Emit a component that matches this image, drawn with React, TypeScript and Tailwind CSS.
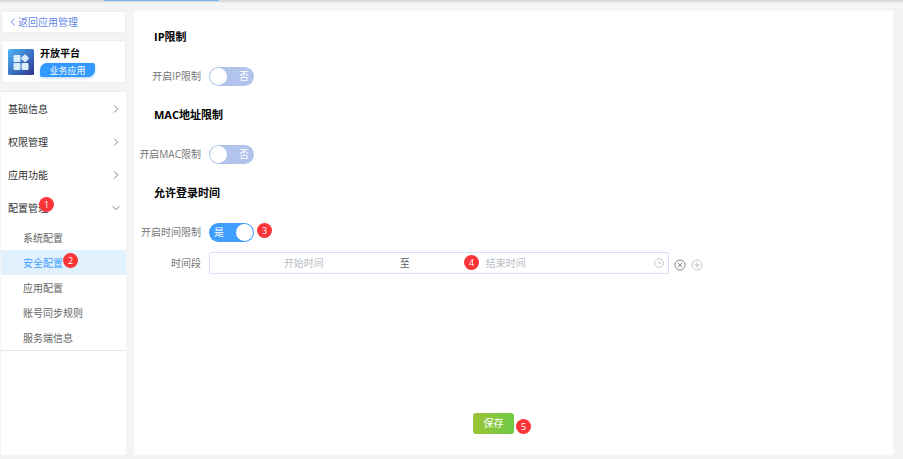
import { useState, type ReactNode } from 'react';
import clsx from 'clsx';

const menuItems = ['基础信息', '权限管理', '应用功能', '配置管理'];
const subItems = ['系统配置', '安全配置', '应用配置', '账号同步规则', '服务端信息'];

const Badge = ({ value, className }: { value: number; className?: string }) => (
  <span
    className={clsx(
      'flex h-[15px] w-[15px] shrink-0 items-center justify-center rounded-full bg-[#fb3438] text-[9px] leading-none text-white',
      className,
    )}
  >
    {value}
  </span>
);

const Chevron = ({ open, className }: { open?: boolean; className?: string }) => (
  <svg
    viewBox="0 0 10 10"
    fill="none"
    stroke="currentColor"
    strokeWidth="1"
    className={clsx('h-[10px] w-[10px]', className)}
  >
    <path d={open ? 'M1.5 3.2l3.5 3.4 3.5-3.4' : 'M3.2 1.5l3.5 3.5-3.5 3.5'} />
  </svg>
);

const AppLogo = () => (
  <svg viewBox="0 0 26 26" className="h-[26px] w-[26px] shrink-0">
    <defs>
      <linearGradient id="logo" x1="0" y1="0" x2="1" y2="1">
        <stop offset="0" stopColor="#51b6f8" />
        <stop offset="0.5" stopColor="#3c78c6" />
        <stop offset="1" stopColor="#303291" />
      </linearGradient>
    </defs>
    <rect width="26" height="26" rx="1.5" fill="url(#logo)" />
    <g fill="#d9edfb">
      <rect x="5.5" y="6" width="7" height="7" rx="1" />
      <rect x="5.5" y="14" width="7" height="7" rx="1" />
      <rect x="13.5" y="14" width="7" height="7" rx="1" />
      <rect x="14" y="6.2" width="6" height="6" rx="1" transform="rotate(45 17 9.2)" />
    </g>
  </svg>
);

const Sidebar = () => {
  const [active, setActive] = useState('安全配置');

  return (
    <aside className="flex w-[125px] shrink-0 flex-col">
      <a
        href="#apps"
        className="flex h-[22px] items-center border border-[#eeeeee] bg-white pb-px pl-[6px] text-[10px] text-[#6688e8]"
      >
        <Chevron className="rotate-180" />
        返回应用管理
      </a>

      <div className="mt-[7px] flex h-[43px] items-center gap-[6px] rounded-xs border border-[#eeeeee] bg-white pl-1.5">
        <AppLogo />
        <div className="flex flex-col gap-[3px]">
          <h1 className="text-[10px] leading-[14px] font-bold text-black">开放平台</h1>
          <span className="flex h-[14px] w-[55px] items-center justify-center rounded-tl-[7px] rounded-tr-xs rounded-br-[7px] rounded-bl-xs bg-[#3299fe] text-[9px] leading-none text-white shadow-sm shadow-blue-200">
            业务应用
          </span>
        </div>
      </div>

      <nav className="mt-2 flex-1 border-t border-[#e9ecf3] bg-white">
        {menuItems.map((item) => {
          const open = item === '配置管理';
          return (
            <button
              key={item}
              type="button"
              className="relative flex h-[33px] w-full items-center justify-between pr-[5px] pl-[7px] text-[10px] text-[#303133]"
            >
              {item}
              <Chevron open={open} className="text-[#808387]" />
              {open && <Badge value={1} className="absolute top-[6px] left-[38px]" />}
            </button>
          );
        })}
        <ul className="border-b border-[#e4e7f0] pt-px">
          {subItems.map((item) => (
            <li key={item}>
              <button
                type="button"
                onClick={() => setActive(item)}
                className={clsx(
                  'relative flex h-[25px] w-full items-center pl-[22px] text-[10px]',
                  item === active ? 'bg-[#e2f1fe] text-[#409eff]' : 'text-[#666666]',
                )}
              >
                {item}
                {item === '安全配置' && (
                  <Badge value={2} className="absolute top-[3px] left-[62px]" />
                )}
              </button>
            </li>
          ))}
        </ul>
      </nav>
    </aside>
  );
};

const Heading = ({ children }: { children: ReactNode }) => (
  <h2 className="mb-[19px] ml-5 text-[11px] leading-[20px] font-bold text-black">{children}</h2>
);

interface SwitchRowProps {
  id: string;
  label: string;
  defaultChecked?: boolean;
  children?: ReactNode;
}

const SwitchRow = ({ id, label, defaultChecked = false, children }: SwitchRowProps) => {
  const [checked, setChecked] = useState(defaultChecked);

  return (
    <div className="flex h-5 items-center">
      <label
        htmlFor={id}
        className="mr-2 w-[67px] pb-px text-right text-[10px] whitespace-nowrap text-[#777777]"
      >
        {label}
      </label>
      <label
        className={clsx(
          'flex h-[19px] w-[45px] cursor-pointer items-center justify-between rounded-full px-px text-[10px] leading-none text-white',
          checked ? 'bg-[#409eff]' : 'flex-row-reverse bg-[#b1c3eb]',
        )}
      >
        <input
          id={id}
          type="checkbox"
          role="switch"
          checked={checked}
          onChange={(e) => setChecked(e.target.checked)}
          className="sr-only"
        />
        <span className={checked ? 'pl-1' : 'pr-1'}>{checked ? '是' : '否'}</span>
        <span className="h-[17px] w-[17px] rounded-full bg-white" />
      </label>
      {children}
    </div>
  );
};

const TimeRange = () => (
  <div className="mt-[10px] flex h-[22px] items-center">
    <label htmlFor="start" className="mr-2 w-[67px] text-right text-[10px] text-[#777777]">
      时间段
    </label>
    <div className="relative flex h-[22px] max-w-[460px] flex-1 items-center rounded-xs border border-[#d5dff6] text-[10px]">
      <input
        id="start"
        placeholder="开始时间"
        className="h-5 w-[41%] bg-transparent pb-px text-center outline-none placeholder:text-[#b9bdc6]"
      />
      <span className="w-[14px] text-center text-[#606266]">至</span>
      <input
        id="end"
        aria-label="结束时间"
        placeholder="结束时间"
        className="h-5 w-[41%] bg-transparent pb-px text-center outline-none placeholder:text-[#b9bdc6]"
      />
      <svg
        viewBox="0 0 10 10"
        fill="none"
        stroke="#c0c4cc"
        className="mr-1 ml-auto h-[10px] w-[10px]"
      >
        <circle cx="5" cy="5" r="4.4" strokeWidth="0.9" />
        <path d="M5 2.5V5.3H7.5" strokeWidth="0.9" />
      </svg>
      <Badge value={4} className="absolute top-[2px] left-[55.5%]" />
    </div>
    <button type="button" aria-label="删除" className="mt-1 ml-[5px] text-[#85888e]">
      <svg viewBox="0 0 12 12" fill="none" stroke="currentColor" className="h-3 w-3">
        <circle cx="6" cy="6" r="5" />
        <path d="M3.8 3.8l4.4 4.4M8.2 3.8l-4.4 4.4" />
      </svg>
    </button>
    <button type="button" aria-label="添加" className="mt-1 ml-[5px] text-[#c0c4cc]">
      <svg viewBox="0 0 12 12" fill="none" stroke="currentColor" className="h-3 w-3">
        <circle cx="6" cy="6" r="5" />
        <path d="M6 3v6M3 6h6" />
      </svg>
    </button>
  </div>
);

const App = () => {
  return (
    <div className="flex min-h-screen flex-col bg-[#f4f4f4] font-['Open_Sans','Noto_Sans_CJK_SC',sans-serif] leading-none">
      <header className="flex h-[3px] border-b border-[#ebebeb] bg-[#dcdcdc]">
        <div className="ml-[104px] h-px w-[115px] bg-[#7db6f5]" />
      </header>

      <div className="flex flex-1 gap-2 pt-2 pr-[10px] pb-1 pl-px">
        <Sidebar />

        <main className="min-w-0 flex-1 bg-white pt-4">
          <Heading>IP限制</Heading>
          <SwitchRow id="ip" label="开启IP限制" />

          <div className="mt-[19px]">
            <Heading>MAC地址限制</Heading>
            <SwitchRow id="mac" label="开启MAC限制" />
          </div>

          <div className="mt-[19px]">
            <Heading>允许登录时间</Heading>
            <SwitchRow id="time" label="开启时间限制" defaultChecked>
              <Badge value={3} className="mb-1 ml-[3px]" />
            </SwitchRow>
            <TimeRange />
          </div>

          <div className="mt-[139px] flex justify-center pr-10">
            <button
              type="button"
              className="relative h-[21px] w-[41px] rounded-[3px] bg-linear-to-r from-[#9ac337] to-[#6dca45] pb-px text-[10px] text-white"
            >
              保存
              <Badge value={5} className="absolute top-[6px] left-[43px]" />
            </button>
          </div>
        </main>
      </div>
    </div>
  );
};

export default App;
